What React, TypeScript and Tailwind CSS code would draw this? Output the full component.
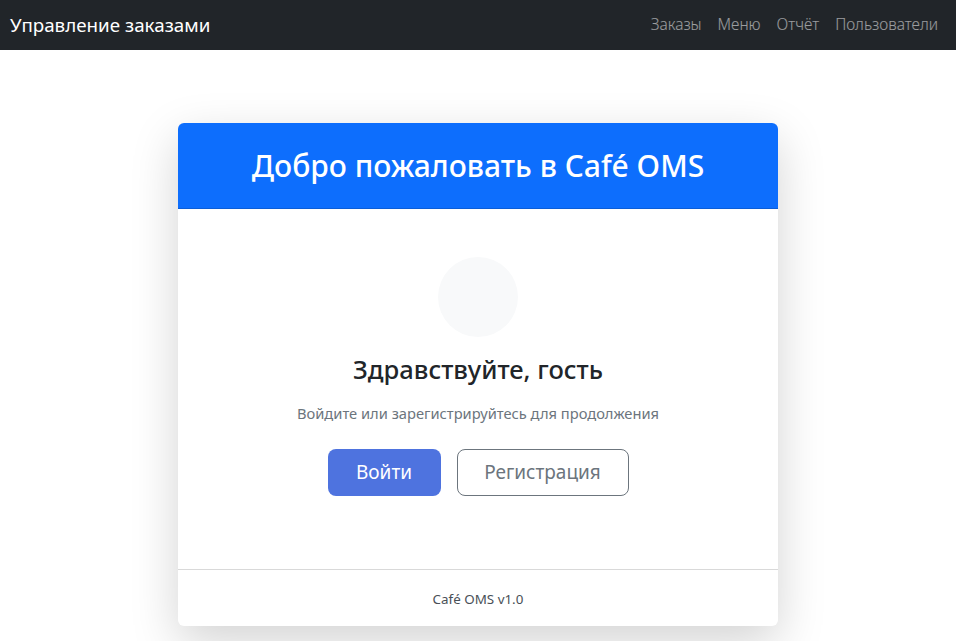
import React from 'react';

const navLinks = ['Заказы', 'Меню', 'Отчёт', 'Пользователи'];

export default function App() {
  return (
    <div className="min-h-screen bg-white font-['Noto_Sans',sans-serif] text-[#212529]">
      <nav className="h-[50px] bg-[#212529] flex items-center justify-between pl-[10px] pr-[10px]">
        <span className="text-[18.8px] text-white">Управление заказами</span>
        <div className="flex items-center">
          {navLinks.map((link) => (
            <a key={link} href="#" className="px-[8px] text-[15.5px] font-light text-white/55">
              {link}
            </a>
          ))}
        </div>
      </nav>

      <div className="w-[600px] mx-auto mt-[73px] bg-white rounded-[6px] shadow-[0_16px_48px_rgba(0,0,0,0.175)] overflow-hidden">
        <div className="h-[86px] bg-[#0d6efd] border-b border-[#0b5ed7] flex items-center justify-center">
          <h2 className="text-[30px] font-medium text-white leading-[1.2]">Добро пожаловать в Café OMS</h2>
        </div>

        <div className="pt-[48px] pb-[73px] flex flex-col items-center">
          <div className="w-[80px] h-[80px] rounded-full bg-[#f8f9fa]" />
          <h4 className="mt-[17px] text-[25.5px] font-medium leading-[1.2]">Здравствуйте, гость</h4>
          <p className="mt-[17px] text-[14.7px] text-[#6c757d] leading-[1.5]">
            Войдите или зарегистрируйтесь для продолжения
          </p>
          <div className="mt-[25px] flex gap-[16px]">
            <button className="w-[113px] h-[47px] rounded-[8px] bg-[#4e73df] text-white text-[19px]">
              Войти
            </button>
            <button className="w-[172px] h-[47px] rounded-[8px] border border-[#6c757d] text-[#6c757d] text-[19px]">
              Регистрация
            </button>
          </div>
        </div>

        <div className="h-[57px] pt-[3px] border-t border-[#d9d9d9] flex items-center justify-center">
          <span className="text-[13.4px] text-[#495057]">Café OMS v1.0</span>
        </div>
      </div>
    </div>
  );
}
